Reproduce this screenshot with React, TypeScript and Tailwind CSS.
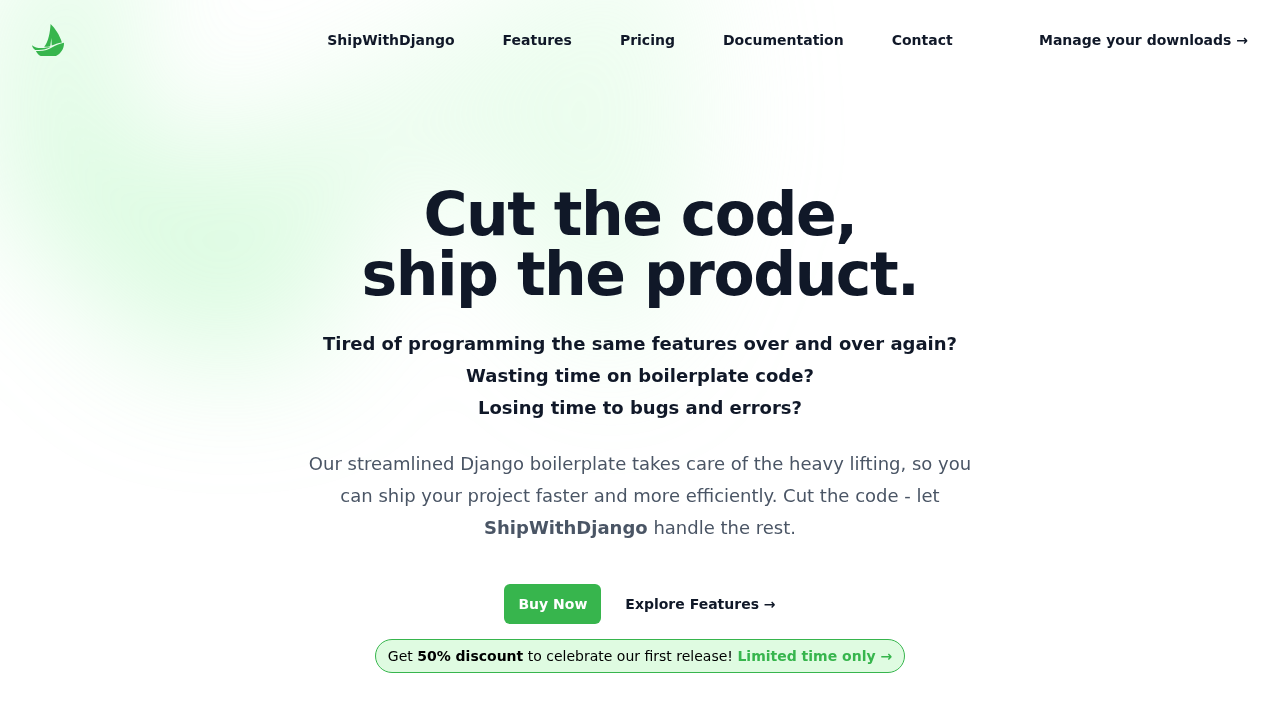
const links = ['ShipWithDjango', 'Features', 'Pricing', 'Documentation', 'Contact'];

function Logo() {
  return (
    <svg viewBox="0 0 32 32" className="size-8" fill="#37b54d" aria-hidden="true">
      <path d="M18.600 0C23 4.300 27.600 10.800 29.900 18.400C26 19 22.700 20.300 19.700 21.600L19.400 14L18.200 22.200C16.300 22.600 14.300 22.800 12.200 22.700C16.500 17.800 18.100 8 18.600 0Z" />
      <path d="M0 21.200C2.500 23.300 5.900 24.200 9.300 24.100C12.900 24 15.400 23.300 18.400 23C14.500 25.200 9.300 26.600 3.200 25.900C1.500 24.900 .4 23.200 0 21.200Z" />
      <path d="M3.900 26.900C11 27.700 16.300 25.600 20.300 23.200C24 21.100 28 19.400 32 18.800C32.200 24.600 28.800 29.800 24 32H8.700C6.700 30.900 4.900 29 3.900 26.900Z" />
    </svg>
  );
}

export default function App() {
  return (
    <div className="relative isolate min-h-screen overflow-hidden bg-white font-['DejaVu_Sans',sans-serif] text-gray-900">
      <div
        aria-hidden="true"
        className="pointer-events-none absolute inset-x-0 -top-80 -z-10 transform-gpu overflow-hidden blur-3xl"
      >
        <div className="relative left-[calc(50%-30rem)] aspect-[1155/678] w-[1155px] -translate-x-1/2 rotate-[30deg] bg-linear-to-tr/srgb from-[#48e965] to-[#defbe1] opacity-30 [clip-path:polygon(74.1%_44.1%,100%_61.6%,97.5%_26.9%,85.5%_0.1%,80.7%_2%,72.5%_32.5%,60.2%_62.4%,52.4%_68.1%,47.5%_58.3%,45.2%_34.5%,27.5%_76.7%,0.1%_64.9%,17.9%_100%,27.6%_76.8%,76.1%_97.7%,74.1%_44.1%)]" />
      </div>

      <header>
        <nav aria-label="Global" className="flex items-center justify-between px-8 py-6 text-sm leading-6 font-semibold">
          <div className="flex flex-1">
            <a href="#home" aria-label="ShipWithDjango">
              <Logo />
            </a>
          </div>
          <div className="flex gap-x-12">
            {links.map((label) => (
              <a key={label} href={`#${label.toLowerCase()}`}>
                {label}
              </a>
            ))}
          </div>
          <div className="flex flex-1 justify-end">
            <a href="#downloads">
              Manage your downloads <span aria-hidden="true">→</span>
            </a>
          </div>
        </nav>
      </header>

      <main className="px-8 pt-26 pb-12 text-center">
        <div className="mx-auto max-w-2xl">
          <h1 className="text-6xl leading-none font-bold tracking-tight">
            Cut the code,
            <br />
            ship the product.
          </h1>
          <p className="mt-6 text-lg leading-8 font-semibold">
            Tired of programming the same features over and over again?
            <br />
            Wasting time on boilerplate code?
            <br />
            Losing time to bugs and errors?
          </p>
          <p className="mt-6 text-lg leading-8 text-gray-600">
            Our streamlined Django boilerplate takes care of the heavy lifting, so you can ship your project faster and
            more efficiently. Cut the code - let <strong>ShipWithDjango</strong> handle the rest.
          </p>
          <div className="mt-10 flex items-center justify-center gap-x-6 text-sm font-semibold">
            <a href="#pricing" className="rounded-md bg-[#37b54d] px-3.5 py-2.5 text-white">
              Buy Now
            </a>
            <a href="#features" className="leading-6">
              Explore Features <span aria-hidden="true">→</span>
            </a>
          </div>
          <div className="mt-[15px] flex justify-center">
            <p className="rounded-full border border-[#37b54d] bg-[#dffbe1] px-3 py-1 text-sm leading-6 text-black">
              Get <strong>50% discount</strong> to celebrate our first release!{' '}
              <a href="#pricing" className="font-semibold text-[#37b54d]">
                Limited time only <span aria-hidden="true">→</span>
              </a>
            </p>
          </div>
        </div>
      </main>
    </div>
  );
}
